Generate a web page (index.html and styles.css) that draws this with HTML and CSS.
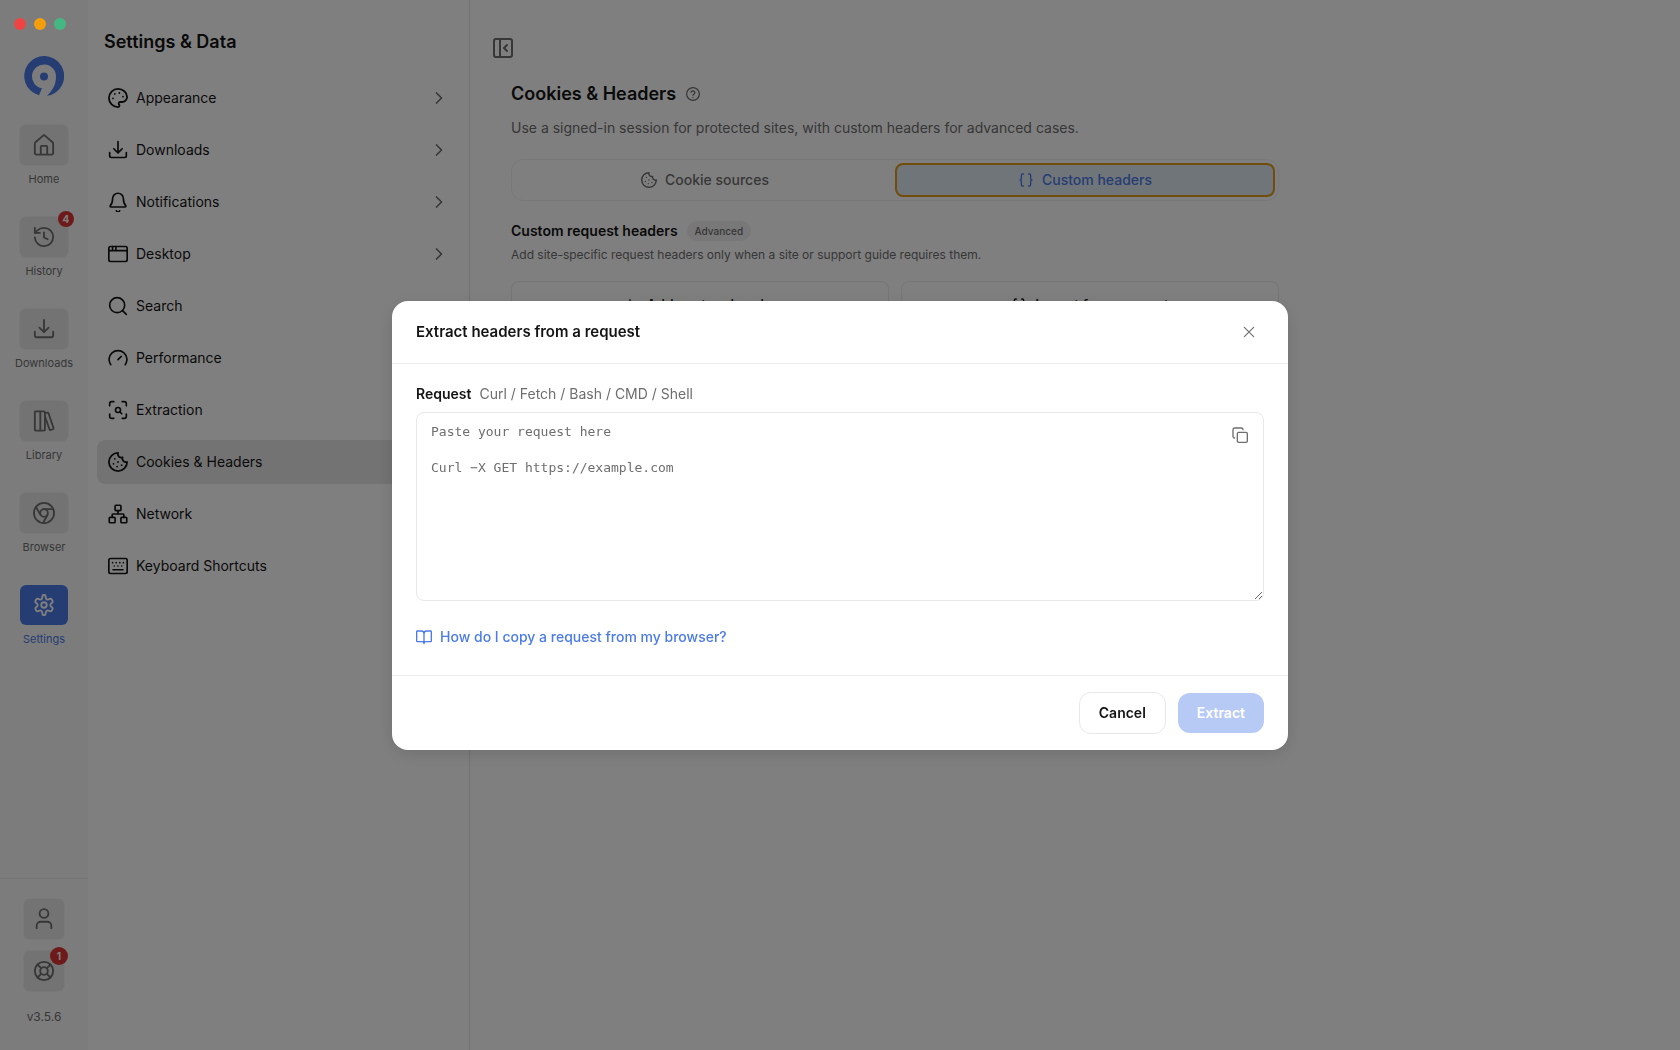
FILE: index.html
```html
<!DOCTYPE html>
<html lang="en">
  <head>
    <meta charset="utf-8">
    <title>Settings &amp; Data</title>
    <link rel="stylesheet" href="styles.css">
  </head>

  <body>

    <!-- icons used more than once -->
    <svg class="sprite" aria-hidden="true">
      <symbol id="i-download" viewBox="0 0 24 24"><path d="M12 2v13"/><path d="m7 10.500 5 5 5-5"/><path d="M2 15v4a2 2 0 0 0 2 2h16a2 2 0 0 0 2-2v-4"/></symbol>
      <symbol id="i-chevron" viewBox="0 0 24 24"><path d="m9 18 6-6-6-6"/></symbol>
      <symbol id="i-cookie" viewBox="1 1 22 22"><path d="M12 2a10 10 0 1 0 10 10 4 4 0 0 1-5-5 4 4 0 0 1-5-5"/><path d="M8.500 8.500v.01M16 15.500v.01M12 12v.01M11 17v.01M7 14v.01"/></symbol>
      <symbol id="i-braces" viewBox="0 0 24 24"><path d="M8 3H7a2 2 0 0 0-2 2v5a2 2 0 0 1-2 2 2 2 0 0 1 2 2v5a2 2 0 0 0 2 2h1"/><path d="M16 21h1a2 2 0 0 0 2-2v-5a2 2 0 0 1 2-2 2 2 0 0 1-2-2V5a2 2 0 0 0-2-2h-1"/></symbol>
    </svg>

    <div class="lights"><i class="red"></i><i class="amber"></i><i class="green"></i></div>

    <div class="app">
      <nav class="rail">
        <svg class="logo" viewBox="0 0 40 40"><path d="M15 39.300A20 20 0 1 1 23 39.800C28.500 34.500 32 29 32 20.500A12 12 0 1 0 18 32.300Z"/><circle cx="20" cy="20.500" r="4"/></svg>

        <a class="rail-item" href="#">
          <span class="tile"><svg class="icon" viewBox="0 0 24 24"><path d="M2 10.500a2 2 0 0 1 .7-1.500l8-7a2 2 0 0 1 2.600 0l8 7a2 2 0 0 1 .7 1.500V20.500a2 2 0 0 1-2 2H4a2 2 0 0 1-2-2z"/><path d="M8.500 22v-8a1 1 0 0 1 1-1h5a1 1 0 0 1 1 1v8"/></svg></span>
          <span>Home</span>
        </a>
        <a class="rail-item" href="#">
          <span class="tile"><svg class="icon" viewBox="0 0 24 24"><path d="M2 12.500a10 10 0 1 0 10-10.500 10.800 10.800 0 0 0-7.500 3L2 7.500"/><path d="M2 2v5.500h5.500"/><path d="M12 7v5.500l4 2"/></svg><b class="badge">4</b></span>
          <span>History</span>
        </a>
        <a class="rail-item" href="#">
          <span class="tile"><svg class="icon"><use href="#i-download"/></svg></span>
          <span>Downloads</span>
        </a>
        <a class="rail-item" href="#">
          <span class="tile"><svg class="icon" viewBox="0 0 24 24"><path d="M3 1.500h4a1 1 0 0 1 1 1v19a1 1 0 0 1-1 1H3a1 1 0 0 1-1-1v-19a1 1 0 0 1 1-1z"/><path d="M8 1.500h4a1 1 0 0 1 1 1v19a1 1 0 0 1-1 1H8"/><path d="m13 3.800 2.600-.9a1 1 0 0 1 1.300.6l5.500 16.300a1 1 0 0 1-.6 1.200l-2.400.8a1 1 0 0 1-1.300-.6L13 7"/></svg></span>
          <span>Library</span>
        </a>
        <a class="rail-item" href="#">
          <span class="tile"><svg class="icon" viewBox="0 0 24 24"><circle cx="12" cy="12" r="11"/><circle cx="12" cy="12" r="4.200"/><path d="M21.900 7.800H12M3.200 5.400l5.200 8.800M11 22.900l4.700-8.700"/></svg></span>
          <span>Browser</span>
        </a>
        <a class="rail-item active" href="#">
          <span class="tile"><svg class="icon" viewBox="0 0 24 24"><path d="M10.300 2.600a1.700 1.700 0 0 1 3.400 0l.3 1.600a2 2 0 0 0 2.900 1.700l1.500-.6a1.700 1.700 0 0 1 2 .7l.8 1.400a1.700 1.700 0 0 1-.4 2.100l-1.200 1a2 2 0 0 0 0 3.100l1.200 1a1.700 1.700 0 0 1 .4 2.100l-.8 1.400a1.700 1.700 0 0 1-2 .7l-1.500-.6a2 2 0 0 0-2.900 1.700l-.3 1.600a1.700 1.700 0 0 1-3.400 0L10 19.900a2 2 0 0 0-2.900-1.700l-1.500.6a1.700 1.700 0 0 1-2-.7l-.8-1.400a1.700 1.700 0 0 1 .4-2.100l1.200-1a2 2 0 0 0 0-3.100l-1.200-1a1.700 1.700 0 0 1-.4-2.100L3.600 6a1.700 1.700 0 0 1 2-.7l1.500.6A2 2 0 0 0 10 4.200z"/><circle cx="12" cy="12" r="3"/></svg></span>
          <span>Settings</span>
        </a>

        <div class="rail-foot">
          <button class="tile small" aria-label="Account"><svg class="icon" viewBox="0 0 24 24"><circle cx="12" cy="6" r="4.800"/><path d="M4 22v-2.500A4.500 4.500 0 0 1 8.500 15h7a4.500 4.500 0 0 1 4.500 4.500V22"/></svg></button>
          <button class="tile small" aria-label="Support"><svg class="icon" viewBox="0 0 24 24"><circle cx="12" cy="12" r="10"/><circle cx="12" cy="12" r="4.200"/><path d="m5 5 4 4M15 9l4-4M15 15l4 4M9 15l-4 4"/></svg><b class="badge">1</b></button>
          <span class="version">v3.5.6</span>
        </div>
      </nav>

      <aside class="panel">
        <h2>Settings &amp; Data</h2>
        <a class="row" href="#"><svg class="icon" viewBox="1 1 22 22"><path d="M12 2C6.500 2 2 6.500 2 12s4.500 10 10 10c.93 0 1.650-.75 1.650-1.690 0-.44-.18-.83-.44-1.120-.29-.29-.44-.65-.44-1.130a1.640 1.640 0 0 1 1.670-1.670h2c3.050 0 5.550-2.500 5.550-5.550C21.970 6.010 17.460 2 12 2z"/><path d="M13.500 6.500v.01M17.500 10.500v.01M8.500 7.500v.01M6.500 12.500v.01"/></svg>Appearance<svg class="chev"><use href="#i-chevron"/></svg></a>
        <a class="row" href="#"><svg class="icon"><use href="#i-download"/></svg>Downloads<svg class="chev"><use href="#i-chevron"/></svg></a>
        <a class="row" href="#"><svg class="icon" viewBox="0 0 24 24"><path d="M10 22.500a2.200 2.200 0 0 0 4 0"/><path d="M2.800 16.300A1 1 0 0 0 3.500 18h17a1 1 0 0 0 .7-1.700C19.900 15 18.500 13.500 18.500 8a6.500 6.500 0 0 0-13 0c0 5.500-1.400 7-2.700 8.300"/></svg>Notifications<svg class="chev"><use href="#i-chevron"/></svg></a>
        <a class="row" href="#"><svg class="icon" viewBox="0 0 24 24"><rect x="1" y="3" width="22" height="18" rx="2"/><path d="M1 8h22M5.500 3v5M9.500 3v5"/></svg>Desktop<svg class="chev"><use href="#i-chevron"/></svg></a>
        <a class="row" href="#"><svg class="icon" viewBox="0 0 24 24"><circle cx="11" cy="11" r="9"/><path d="m22 22-4.500-4.500"/></svg>Search</a>
        <a class="row" href="#"><svg class="icon" viewBox="0 0 24 24"><path d="m12 14 4-4"/><path d="M3.300 20a10.700 10.700 0 1 1 17.400 0"/></svg>Performance</a>
        <a class="row" href="#"><svg class="icon" viewBox="0 0 24 24"><path d="M2 7V4.500A2.500 2.500 0 0 1 4.500 2H7M17 2h2.500A2.500 2.500 0 0 1 22 4.500V7M22 17v2.500a2.500 2.500 0 0 1-2.500 2.500H17M7 22H4.500A2.500 2.500 0 0 1 2 19.500V17"/><circle cx="12" cy="12" r="3"/><path d="m16.500 16.500-2.300-2.300"/></svg>Extraction</a>
        <a class="row current" href="#"><svg class="icon"><use href="#i-cookie"/></svg>Cookies &amp; Headers</a>
        <a class="row" href="#"><svg class="icon" viewBox="0 0 24 24"><rect x="15.500" y="16" width="7" height="6.500" rx="1"/><rect x="1.500" y="16" width="7" height="6.500" rx="1"/><rect x="8.500" y="1.500" width="7" height="6.500" rx="1"/><path d="M5 16v-3a1 1 0 0 1 1-1h12a1 1 0 0 1 1 1v3M12 12V8"/></svg>Network</a>
        <a class="row" href="#"><svg class="icon" viewBox="0 0 24 24"><rect x="1" y="3" width="22" height="18" rx="2"/><path d="M6 16.500h12M5.500 8v.01M9.800 8v.01M14.200 8v.01M18.500 8v.01M7.500 12v.01M12 12v.01M16.500 12v.01"/></svg>Keyboard Shortcuts</a>
      </aside>

      <main class="main">
        <button class="collapse" aria-label="Collapse panel"><svg class="icon" viewBox="0 0 24 24"><rect x="3" y="3" width="18" height="18" rx="2"/><path d="M9 3v18M16 9l-3 3 3 3"/></svg></button>
        <div class="content">
          <div class="title">
            <h1>Cookies &amp; Headers</h1>
            <svg class="icon help" viewBox="1 1 22 22"><circle cx="12" cy="12" r="10"/><path d="M9 9.300a3 3 0 0 1 5.900.8c0 2-2.900 2.600-2.900 4M12 17.500v.01"/></svg>
          </div>
          <p class="lead">Use a signed-in session for protected sites, with custom headers for advanced cases.</p>

          <div class="tabs">
            <button class="tab"><svg class="icon"><use href="#i-cookie"/></svg>Cookie sources</button>
            <button class="tab on"><svg class="icon"><use href="#i-braces"/></svg>Custom headers</button>
          </div>

          <div class="section-head">
            <h3>Custom request headers</h3>
            <span class="pill">Advanced</span>
          </div>
          <p class="hint">Add site-specific request headers only when a site or support guide requires them.</p>

          <div class="actions">
            <button class="action"><svg class="icon" viewBox="0 0 24 24"><path d="M12 4v16M4 12h16"/></svg>Add custom header</button>
            <button class="action"><svg class="icon"><use href="#i-braces"/></svg>Import from request</button>
          </div>
        </div>
      </main>
    </div>

    <div class="backdrop">
      <div class="modal" role="dialog" aria-labelledby="modal-title">
        <header class="modal-head">
          <h2 id="modal-title">Extract headers from a request</h2>
          <button class="close" aria-label="Close"><svg class="icon" viewBox="0 0 24 24"><path d="M4 4l16 16M20 4 4 20"/></svg></button>
        </header>
        <div class="modal-body">
          <div class="field-label"><label for="request">Request</label><span>Curl / Fetch / Bash / CMD / Shell</span></div>
          <div class="field">
            <textarea id="request" placeholder="Paste your request here&#10;&#10;Curl −X GET https://example.com"></textarea>
            <button class="copy" aria-label="Copy"><svg class="icon" viewBox="0 0 24 24"><rect x="8" y="8" width="15" height="15" rx="2"/><path d="M4 16.500a2.500 2.500 0 0 1-2.500-2V4A2.500 2.500 0 0 1 4 1.500h10.500a2.500 2.500 0 0 1 2 2.500"/></svg></button>
          </div>
          <a class="how" href="#"><svg class="icon" viewBox="0 0 24 24"><path d="M12 6v16M2 3h6a4 4 0 0 1 4 4 4 4 0 0 1 4-4h6a1 1 0 0 1 1 1v14a1 1 0 0 1-1 1h-7a3 3 0 0 0-3 3 3 3 0 0 0-3-3H2a1 1 0 0 1-1-1V4a1 1 0 0 1 1-1z"/></svg>How do I copy a request from my browser?</a>
        </div>
        <footer class="modal-foot">
          <button class="btn">Cancel</button>
          <button class="btn primary" disabled>Extract</button>
        </footer>
      </div>
    </div>

  </body>
</html>
```

FILE: styles.css
```css
* {
  box-sizing: border-box;
}
body {
  margin: 0;
  font-family: Inter, "Liberation Sans", sans-serif;
  font-size: 14px;
  line-height: 20px;
  color: #141414;
  background: #fff;
}
h1, h2, h3, p {
  margin: 0;
}
h1, h2, h3 {
  font-weight: 600;
}
a {
  color: inherit;
  text-decoration: none;
}
button {
  padding: 0;
  border: 0;
  background: none;
  font: inherit;
  color: inherit;
  cursor: pointer;
}
svg {
  flex: none;
  fill: none;
  stroke: currentColor;
  stroke-width: 2;
  stroke-linecap: round;
  stroke-linejoin: round;
}
.sprite {
  display: none;
}
.icon {
  width: 20px;
  height: 20px;
}

/* window buttons stay above the backdrop */
.lights {
  position: fixed;
  top: 18px;
  left: 14px;
  z-index: 20;
  display: flex;
  gap: 8px;
}
.lights i {
  width: 12px;
  height: 12px;
  border-radius: 50%;
}
.red { background: #ef4444; }
.amber { background: #f59e0b; }
.green { background: #44b883; }

.app {
  display: flex;
  height: 100vh;
  overflow: hidden;
}

/* left rail */
.rail {
  width: 88px;
  flex: none;
  display: flex;
  flex-direction: column;
  align-items: center;
  padding-top: 56px;
  background: #f9f9f9;
  color: #6e6e6e;
  font-size: 11px;
  line-height: 16px;
}
.logo {
  width: 40px;
  height: 40px;
  margin-bottom: 29px;
  fill: #4c7be8;
  stroke: none;
}
.rail-item {
  height: 92px;
  display: flex;
  flex-direction: column;
  align-items: center;
  gap: 6px;
}
.tile {
  position: relative;
  width: 48px;
  height: 40px;
  display: flex;
  align-items: center;
  justify-content: center;
  border-radius: 6px;
  background: #e6e6e6;
  box-shadow: 0 0 2px #dcdcdc;
}
.tile .icon {
  width: 22px;
  height: 22px;
}
.active {
  color: #4c7be8;
}
.active .tile {
  background: #4c7be8;
  box-shadow: none;
  color: #fff;
}
.badge {
  position: absolute;
  top: -6px;
  right: -6px;
  width: 16px;
  height: 16px;
  border-radius: 50%;
  background: #dc3535;
  color: #fff;
  font-size: 10px;
  font-weight: 700;
  line-height: 16px;
  text-align: center;
}
.rail-foot {
  align-self: stretch;
  margin-top: auto;
  padding: 20px 0 25px;
  display: flex;
  flex-direction: column;
  align-items: center;
  gap: 12px;
  border-top: 1px solid #ececec;
}
.tile.small {
  width: 40px;
}
.small .badge {
  top: -4px;
  right: -4px;
  width: 18px;
  height: 18px;
  line-height: 18px;
}
.version {
  margin-top: 6px;
  font-size: 12px;
}

/* settings list */
.panel {
  width: 382px;
  flex: none;
  padding: 28px 9px;
  border-right: 1px solid #e6e6e6;
}
.panel h2 {
  padding: 0 7px;
  margin-bottom: 20px;
  font-size: 18px;
  line-height: 28px;
}
.row {
  display: flex;
  align-items: center;
  gap: 8px;
  height: 44px;
  margin-bottom: 8px;
  padding: 0 11px;
  border-radius: 8px;
}
.current {
  background: #e6e6e6;
}
.chev {
  width: 20px;
  height: 20px;
  margin-left: auto;
  color: #6e6e6e;
}

/* page */
.main {
  flex: 1;
  padding: 36px 20px;
}
.collapse {
  display: block;
  height: 24px;
  padding: 0 1px;
  color: #6e6e6e;
}
.collapse .icon {
  width: 24px;
  height: 24px;
}
.content {
  max-width: 768px;
  margin: 20px 0 0 21px;
}
.title {
  display: flex;
  align-items: center;
  gap: 10px;
}
h1 {
  font-size: 18px;
  line-height: 28px;
}
.icon.help {
  width: 14px;
  height: 14px;
  color: #6e6e6e;
}
.lead {
  margin-top: 10px;
  color: #6e6e6e;
}
.tabs {
  display: flex;
  margin-top: 21px;
  padding: 3px;
  border: 1px solid #f0f0f0;
  border-radius: 12px;
}
.tab {
  flex: 1;
  display: flex;
  align-items: center;
  justify-content: center;
  gap: 8px;
  height: 34px;
  color: #6e6e6e;
  font-weight: 500;
  border: 2px solid transparent;
  border-radius: 8px;
}
.tab .icon,
.action .icon {
  width: 16px;
  height: 16px;
}
.tab.on {
  color: #4c7be8;
  background: #e0eaf3;
  border-color: #e39a17;
}
.section-head {
  display: flex;
  align-items: center;
  gap: 9px;
  margin-top: 20px;
}
h3 {
  font-size: 14px;
}
.pill {
  padding: 0 8px;
  border-radius: 10px;
  background: #f0f0f0;
  color: #6e6e6e;
  font-size: 10px;
  font-weight: 500;
}
.hint {
  margin-top: 6px;
  color: #6e6e6e;
  font-size: 12px;
  line-height: 16px;
}
.actions {
  display: flex;
  gap: 12px;
  margin-top: 18px;
}
.action {
  flex: 1;
  display: flex;
  align-items: center;
  justify-content: center;
  gap: 8px;
  height: 48px;
  border: 1px solid #ececec;
  border-radius: 8px;
  font-weight: 500;
}

/* dialog */
.backdrop {
  position: fixed;
  inset: 0;
  z-index: 10;
  display: flex;
  align-items: center;
  justify-content: center;
  background: rgba(0, 0, 0, 0.5);
}
.modal {
  width: 896px;
  max-width: 100%;
  border-radius: 16px;
  background: #fff;
  box-shadow: 0 4px 16px rgba(0, 0, 0, 0.12);
}
.modal-head {
  display: flex;
  align-items: center;
  justify-content: space-between;
  height: 63px;
  padding: 0 24px;
  border-bottom: 1px solid #ececec;
}
.modal-head h2 {
  font-size: 15px;
}
.close {
  display: flex;
  padding: 8px;
  color: #6e6e6e;
}
.close .icon {
  width: 14px;
  height: 14px;
}
.modal-body {
  padding: 20px 24px 28px;
}
.field-label {
  display: flex;
  gap: 8px;
  margin-bottom: 8px;
  color: #6e6e6e;
}
.field-label label {
  color: #141414;
  font-weight: 600;
}
.field {
  position: relative;
}
textarea {
  display: block;
  width: 100%;
  height: 189px;
  padding: 10px 14px;
  border: 1px solid #e8e8e8;
  border-radius: 8px;
  background: #fff;
  font-family: "DejaVu Sans Mono", monospace;
  font-size: 13px;
  line-height: 18px;
  resize: vertical;
  outline: 0;
}
textarea::placeholder {
  color: #6e6e6e;
}
.copy {
  position: absolute;
  top: 15px;
  right: 16px;
  display: flex;
  color: #6e6e6e;
}
.copy .icon,
.how .icon {
  width: 16px;
  height: 16px;
}
.how {
  display: flex;
  align-items: center;
  gap: 8px;
  margin-top: 26px;
  color: #4c7be8;
  font-weight: 500;
}
.modal-foot {
  display: flex;
  justify-content: flex-end;
  align-items: center;
  gap: 12px;
  padding: 16px 24px;
  border-top: 1px solid #ececec;
}
.btn {
  height: 42px;
  padding: 0 19px;
  border: 1px solid #e8e8e8;
  border-radius: 12px;
  font-weight: 600;
}
.btn.primary {
  height: 40px;
  border: 0;
  background: #4c7be8;
  color: #fff;
  opacity: 0.4;
}
```
